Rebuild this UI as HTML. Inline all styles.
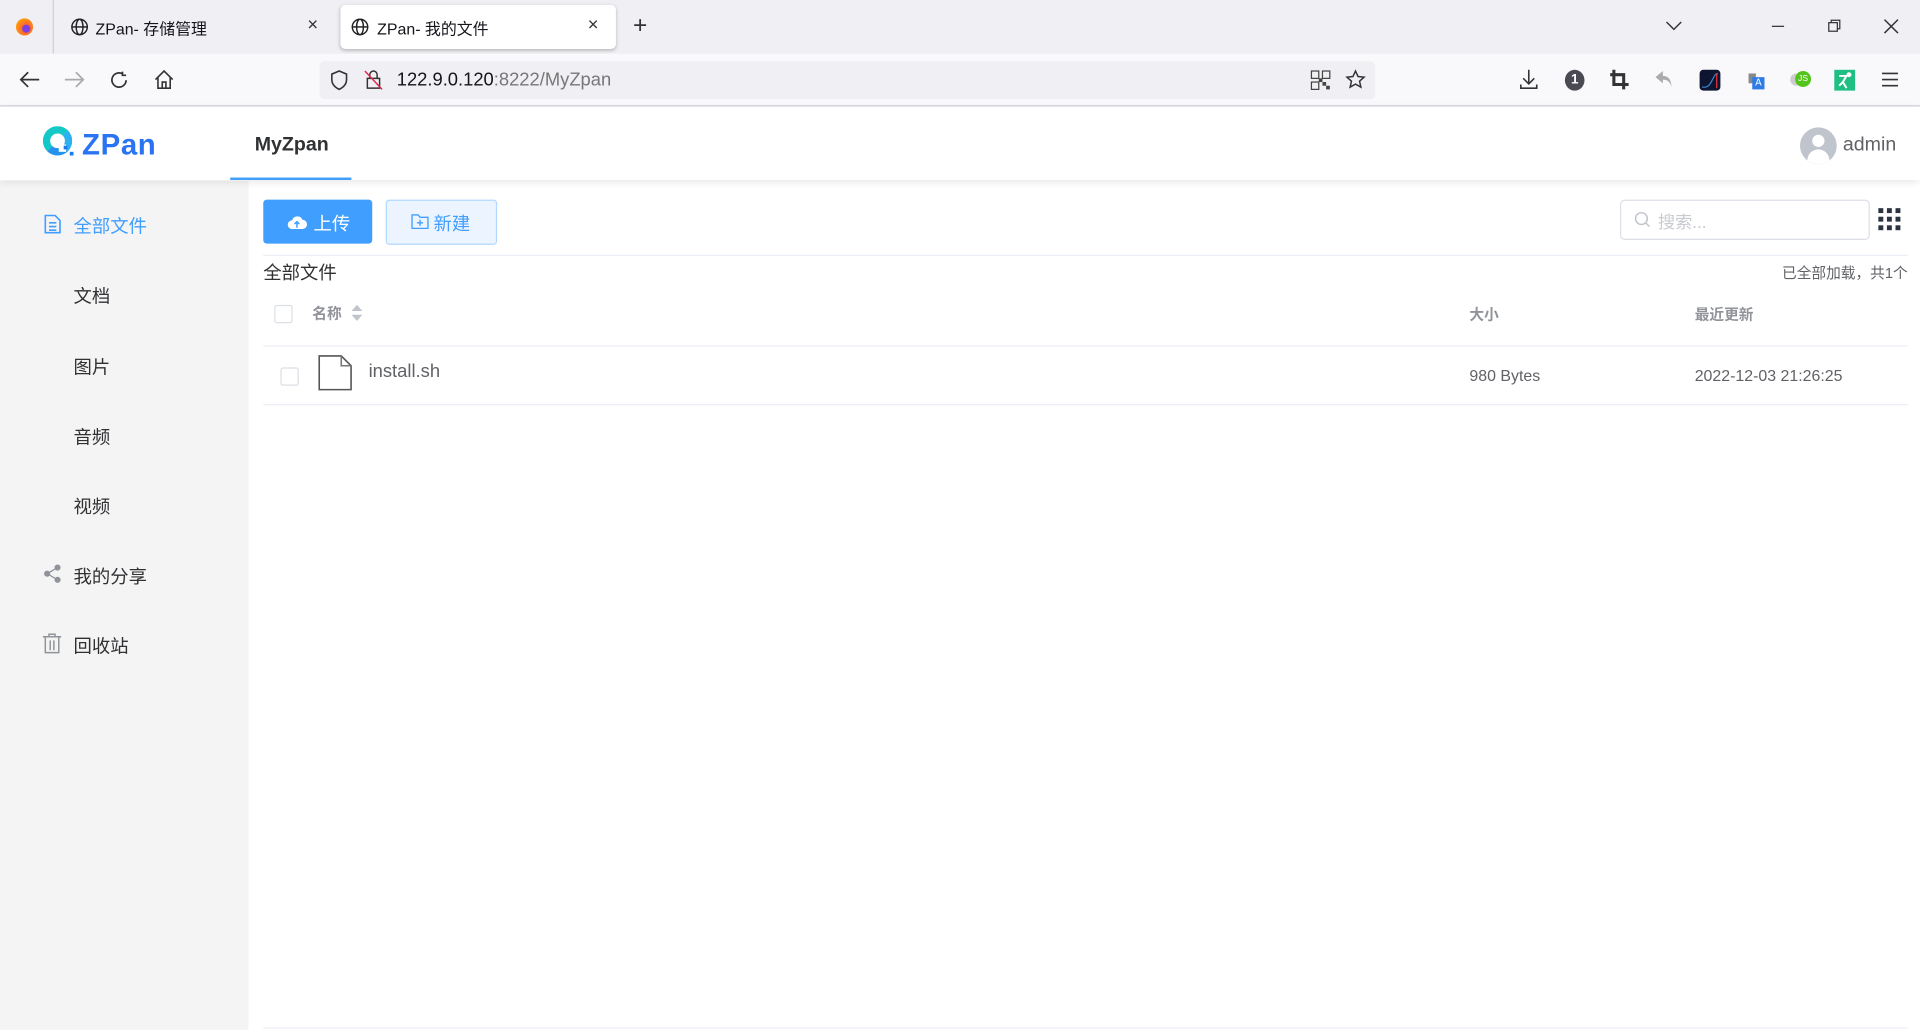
<!DOCTYPE html>
<html><head><meta charset="utf-8"><style>
html,body{margin:0;padding:0;width:1920px;height:1030px;overflow:hidden;background:#fff}
#w{position:absolute;left:0;top:0;width:1568px;height:841px;transform:scale(1.22449);transform-origin:0 0;font-family:"Liberation Sans","Noto Sans CJK SC",sans-serif;}
.a{position:absolute}
.t{white-space:nowrap}
svg{position:absolute;overflow:visible}
</style></head><body><div id="w">
<div class="a" style="left:0;top:0;width:1568px;height:44px;background:#f0f0f4"></div>
<div class="a" style="left:13px;top:15px;width:14px;height:14px;border-radius:50%;background:radial-gradient(circle at 60% 60%,#7b3fe4 25%,#ff6a2b 30%,#ffb000 90%)"></div>
<div class="a" style="left:43px;top:0;width:1px;height:44px;background:#cfcfd8"></div>
<svg style="left:58px;top:15px" width="14" height="14" viewBox="0 0 14 14" fill="none" stroke="#222" stroke-width="1.2"><circle cx="7" cy="7" r="6.3"/><ellipse cx="7" cy="7" rx="2.8" ry="6.3"/><path d="M.7 7h12.6"/></svg>
<div class="a t" style="left:78px;top:13px;font-size:13px;color:#15141a">ZPan- 存储管理</div>
<div class="a t" style="left:251px;top:12px;font-size:15px;color:#333">×</div>
<div class="a" style="left:278px;top:4px;width:225px;height:36px;background:#fff;border-radius:4px;box-shadow:0 1px 3px rgba(0,0,0,.25)"></div>
<svg style="left:287px;top:15px" width="14" height="14" viewBox="0 0 14 14" fill="none" stroke="#222" stroke-width="1.2"><circle cx="7" cy="7" r="6.3"/><ellipse cx="7" cy="7" rx="2.8" ry="6.3"/><path d="M.7 7h12.6"/></svg>
<div class="a t" style="left:308px;top:13px;font-size:13px;color:#15141a">ZPan- 我的文件</div>
<div class="a t" style="left:480px;top:12px;font-size:15px;color:#333">×</div>
<div class="a t" style="left:517px;top:10px;font-size:20px;color:#333">+</div>
<svg style="left:1361px;top:18px" width="12" height="8"><path d="M0 0l6 6 6-6" fill="none" stroke="#333" stroke-width="1.2"/></svg>
<div class="a" style="left:1447px;top:21px;width:10px;height:1px;background:#333"></div>
<svg style="left:1493px;top:16px" width="11" height="11" fill="none" stroke="#333"><rect x=".5" y="2.5" width="7" height="7"/><path d="M2.5 2.5v-2h7v7h-2"/></svg>
<svg style="left:1539px;top:16px" width="11" height="11"><path d="M0 0l11 11M11 0L0 11" stroke="#333" stroke-width="1.2"/></svg>
<div class="a" style="left:0;top:44px;width:1568px;height:42px;background:#f9f9fb;border-bottom:1px solid #cfcfd8"></div>
<svg style="left:16px;top:58px" width="16" height="14" fill="none" stroke="#333" stroke-width="1.4"><path d="M16 7H1M7 1L1 7l6 6"/></svg>
<svg style="left:53px;top:58px" width="16" height="14" fill="none" stroke="#aaa" stroke-width="1.4"><path d="M0 7h15M9 1l6 6-6 6"/></svg>
<svg style="left:90px;top:58px" width="15" height="15" fill="none" stroke="#333" stroke-width="1.4"><path d="M13 7.5A5.8 5.8 0 1 1 10.5 2.6M10 0.5v3h3"/></svg>
<svg style="left:126px;top:57px" width="16" height="16" fill="none" stroke="#333" stroke-width="1.3"><path d="M1 8L8 1l7 7M3 6v9h10V6M6.5 15v-5h3v5"/></svg>
<div class="a" style="left:261px;top:50px;width:862px;height:31px;background:#f0f0f4;border-radius:4px"></div>
<svg style="left:270px;top:57px" width="14" height="17" fill="none" stroke="#333" stroke-width="1.3"><path d="M7 1L1 3.5V8c0 4 3 6.5 6 8 3-1.5 6-4 6-8V3.5z"/></svg>
<svg style="left:298px;top:56px" width="16" height="18" fill="none" stroke="#333" stroke-width="1.2"><path d="M4 8V5a3 3 0 0 1 6 0v3M2 8h10v8H2z"/><path d="M0 2l14 15" stroke="#e22850"/></svg>
<div class="a t" style="left:324px;top:57px;font-size:15px;color:#15141a">122.9.0.120<span style="color:#777">:8222/MyZpan</span></div>
<svg style="left:1071px;top:58px" width="15" height="15" fill="#444"><rect x="0" y="0" width="6" height="6" fill="none" stroke="#444"/><rect x="9" y="0" width="6" height="6" fill="none" stroke="#444"/><rect x="0" y="9" width="6" height="6" fill="none" stroke="#444"/><rect x="9" y="9" width="3" height="3"/><rect x="12" y="12" width="3" height="3"/><rect x="6" y="6" width="3" height="3"/></svg>
<svg style="left:1099px;top:57px" width="16" height="16" fill="none" stroke="#333" stroke-width="1.2"><path d="M8 1l2.1 4.5 4.9.5-3.7 3.3 1.1 4.9L8 11.7 3.6 14.2l1.1-4.9L1 6l4.9-.5z"/></svg>
<svg style="left:1241px;top:57px" width="15" height="16" fill="none" stroke="#333" stroke-width="1.3"><path d="M7.5 0v11M3 7l4.5 4.5L12 7M1 12v3h13v-3"/></svg>
<div class="a" style="left:1278px;top:57px;width:16px;height:17px;border-radius:50%;background:#4a4a55;color:#fff;font-size:11px;font-weight:bold;text-align:center;line-height:17px">1</div>
<svg style="left:1315px;top:57px" width="15" height="16" fill="none" stroke="#333" stroke-width="2.5"><path d="M3 0v12h12M0 4h11v12"/></svg>
<svg style="left:1352px;top:58px" width="14" height="14" fill="#aaa"><path d="M6 0L0 5l6 5V7c4 0 6 2 7 6 0-5-2-9-7-9z"/></svg>
<div class="a" style="left:1388px;top:57px;width:17px;height:17px;border-radius:3px;background:#0e1530"></div>
<svg style="left:1390px;top:60px" width="14" height="12"><path d="M0 11c4 1 6-1 8-5s3-6 5-6" fill="none" stroke="#3a84c8"/><path d="M12 0v12" stroke="#e33"/></svg>
<div class="a" style="left:1428px;top:60px;width:6px;height:8px;background:#888"></div>
<div class="a" style="left:1431px;top:63px;width:10px;height:10px;background:#2f7be6;color:#fff;font-size:8px;line-height:10px;text-align:center">A</div>
<div class="a" style="left:1462px;top:60px;width:10px;height:10px;border-radius:5px;background:#ccc"></div>
<div class="a" style="left:1466px;top:58px;width:13px;height:13px;border-radius:50%;background:#52c41a;color:#fff;font-size:7px;line-height:13px;text-align:center">JS</div>
<div class="a" style="left:1498px;top:57px;width:17px;height:17px;background:#1fbf84"></div>
<svg style="left:1501px;top:59px" width="12" height="13" fill="none" stroke="#fff" stroke-width="1.6"><circle cx="9" cy="2" r="1.2" fill="#fff"/><path d="M1 3h6L4 8l3 5M4 8L1 11"/></svg>
<svg style="left:1537px;top:59px" width="13" height="12" stroke="#333" stroke-width="1.3"><path d="M0 1h13M0 6h13M0 11h13"/></svg>
<div class="a" style="left:0;top:87px;width:1568px;height:60px;background:#fff;box-shadow:0 2px 6px rgba(0,0,0,.1);z-index:2"></div>
<div class="a" style="z-index:3;left:35px;top:103px;width:24px;height:24px;border-radius:50%;border:6px solid #14c8c8;box-sizing:border-box;border-right-color:#2bb0f0;border-bottom-color:#2593ee"></div>
<div class="a" style="z-index:3;left:48px;top:118px;width:6px;height:6px;background:#fff"></div>
<div class="a" style="z-index:3;left:52px;top:119px;width:3px;height:3px;background:#1a7af0"></div>
<div class="a" style="z-index:3;left:57px;top:124px;width:3px;height:3px;background:#1a7af0"></div>
<div class="a t" style="z-index:3;left:67px;top:105px;font-size:24px;font-weight:bold;color:#2a74f4;letter-spacing:0.5px">ZPan</div>
<div class="a t" style="z-index:3;left:208px;top:110px;font-size:16px;font-weight:bold;color:#303133">MyZpan</div>
<div class="a" style="z-index:3;left:188px;top:145px;width:99px;height:2px;background:#409eff"></div>
<div class="a" style="z-index:3;left:1470px;top:104px;width:30px;height:30px;border-radius:50%;background:#c0c4cc;overflow:hidden">
<div class="a" style="left:10px;top:6px;width:10px;height:10px;border-radius:50%;background:#fff"></div>
<div class="a" style="left:6px;top:18px;width:18px;height:12px;border-radius:9px 9px 0 0;background:#fff"></div></div>
<div class="a t" style="z-index:3;left:1505px;top:110px;font-size:16px;color:#606266">admin</div>
<div class="a" style="left:0;top:148px;width:203px;height:693px;background:#f4f4f4"></div>
<svg style="left:36px;top:175px" width="14" height="16" fill="none" stroke="#409eff" stroke-width="1.3"><path d="M1 1h8l4 4v10H1zM4 7h6M4 10h6M4 13h6"/></svg>
<div class="a t" style="left:60px;top:174px;font-size:15px;color:#409eff">全部文件</div>
<div class="a t" style="left:60px;top:231px;font-size:15px;color:#303133">文档</div>
<div class="a t" style="left:60px;top:289px;font-size:15px;color:#303133">图片</div>
<div class="a t" style="left:60px;top:346px;font-size:15px;color:#303133">音频</div>
<div class="a t" style="left:60px;top:403px;font-size:15px;color:#303133">视频</div>
<svg style="left:36px;top:461px" width="14" height="15" fill="#909399" stroke="#909399"><circle cx="11" cy="2.5" r="2"/><circle cx="2.5" cy="7.5" r="2"/><circle cx="11" cy="12.5" r="2"/><path d="M11 2.5L2.5 7.5 11 12.5" fill="none"/></svg>
<div class="a t" style="left:60px;top:460px;font-size:15px;color:#303133">我的分享</div>
<svg style="left:35px;top:517px" width="15" height="17" fill="none" stroke="#909399" stroke-width="1.2"><path d="M0 3h15M5 3V1h5v2M2 3v13h11V3M6 6v8M9 6v8"/></svg>
<div class="a t" style="left:60px;top:517px;font-size:15px;color:#303133">回收站</div>
<div class="a" style="left:215px;top:163px;width:89px;height:36px;background:#409eff;border-radius:3px"></div>
<svg style="left:235px;top:176px" width="15" height="11"><path d="M3.5 11a3.5 3.5 0 0 1 0-7A4.5 4.5 0 0 1 12 3.5a3.5 3.5 0 0 1 0 7.5z" fill="#fff"/><path d="M7.5 10V5M5.5 7l2-2 2 2" stroke="#409eff" fill="none" stroke-width="1.2"/></svg>
<div class="a t" style="left:256px;top:172px;font-size:15px;color:#fff">上传</div>
<div class="a" style="left:315px;top:163px;width:89px;height:35px;background:#ecf5ff;border:1px solid #b3d8ff;border-radius:3px"></div>
<svg style="left:336px;top:175px" width="14" height="12" fill="none" stroke="#409eff" stroke-width="1.1"><path d="M.5 .5h5l1.5 2h6.5v9H.5zM7 4.5v5M4.5 7h5"/></svg>
<div class="a t" style="left:354px;top:172px;font-size:15px;color:#409eff">新建</div>
<div class="a" style="left:1323px;top:163px;width:202px;height:31px;border:1px solid #dcdfe6;border-radius:4px;background:#fff"></div>
<svg style="left:1335px;top:173px" width="13" height="13" fill="none" stroke="#c0c4cc" stroke-width="1.2"><circle cx="5.5" cy="5.5" r="4.8"/><path d="M9 9l3 3"/></svg>
<div class="a t" style="left:1354px;top:171px;font-size:14px;color:#c8cad0">搜索...</div>
<svg style="left:1534px;top:170px" width="19" height="18" fill="#2b3340"><rect x="0" y="0" width="4" height="4"/><rect x="7" y="0" width="4" height="4"/><rect x="14" y="0" width="4" height="4"/><rect x="0" y="7" width="4" height="4"/><rect x="7" y="7" width="4" height="4"/><rect x="14" y="7" width="4" height="4"/><rect x="0" y="14" width="4" height="4"/><rect x="7" y="14" width="4" height="4"/><rect x="14" y="14" width="4" height="4"/></svg>
<div class="a" style="left:215px;top:208px;width:1343px;height:1px;background:#ebeef5"></div>
<div class="a t" style="left:215px;top:212px;font-size:15px;color:#303133">全部文件</div>
<div class="a t" style="right:10px;top:214px;font-size:12px;color:#606266">已全部加载，共1个</div>
<div class="a" style="left:224px;top:249px;width:13px;height:13px;border:1px solid #dcdfe6;border-radius:2px;background:#fff"></div>
<div class="a t" style="left:255px;top:247px;font-size:12px;font-weight:bold;color:#909399">名称</div>
<svg style="left:287px;top:249px" width="9" height="13" fill="#c0c4cc"><path d="M4.5 0L9 5H0zM0 8h9l-4.5 5z"/></svg>
<div class="a t" style="left:1200px;top:248px;font-size:12px;font-weight:bold;color:#909399">大小</div>
<div class="a t" style="left:1384px;top:248px;font-size:12px;font-weight:bold;color:#909399">最近更新</div>
<div class="a" style="left:215px;top:282px;width:1343px;height:1px;background:#ebeef5"></div>
<div class="a" style="left:229px;top:300px;width:13px;height:13px;border:1px solid #dcdfe6;border-radius:2px;background:#fff"></div>
<svg style="left:260px;top:290px" width="28" height="29" fill="none" stroke="#555" stroke-width="1.3"><path d="M.7 .7h18l8 8v19.5H.7z"/><path d="M18.7 .7v8h8" stroke="#777"/></svg>
<div class="a t" style="left:301px;top:295px;font-size:15px;color:#606266">install.sh</div>
<div class="a t" style="left:1200px;top:299px;font-size:13px;color:#606266">980 Bytes</div>
<div class="a t" style="left:1384px;top:299px;font-size:13px;color:#606266">2022-12-03 21:26:25</div>
<div class="a" style="left:215px;top:330px;width:1343px;height:1px;background:#ebeef5"></div>
<div class="a" style="left:215px;top:839px;width:1343px;height:1px;background:#ebeef5"></div>
</div></body></html>
